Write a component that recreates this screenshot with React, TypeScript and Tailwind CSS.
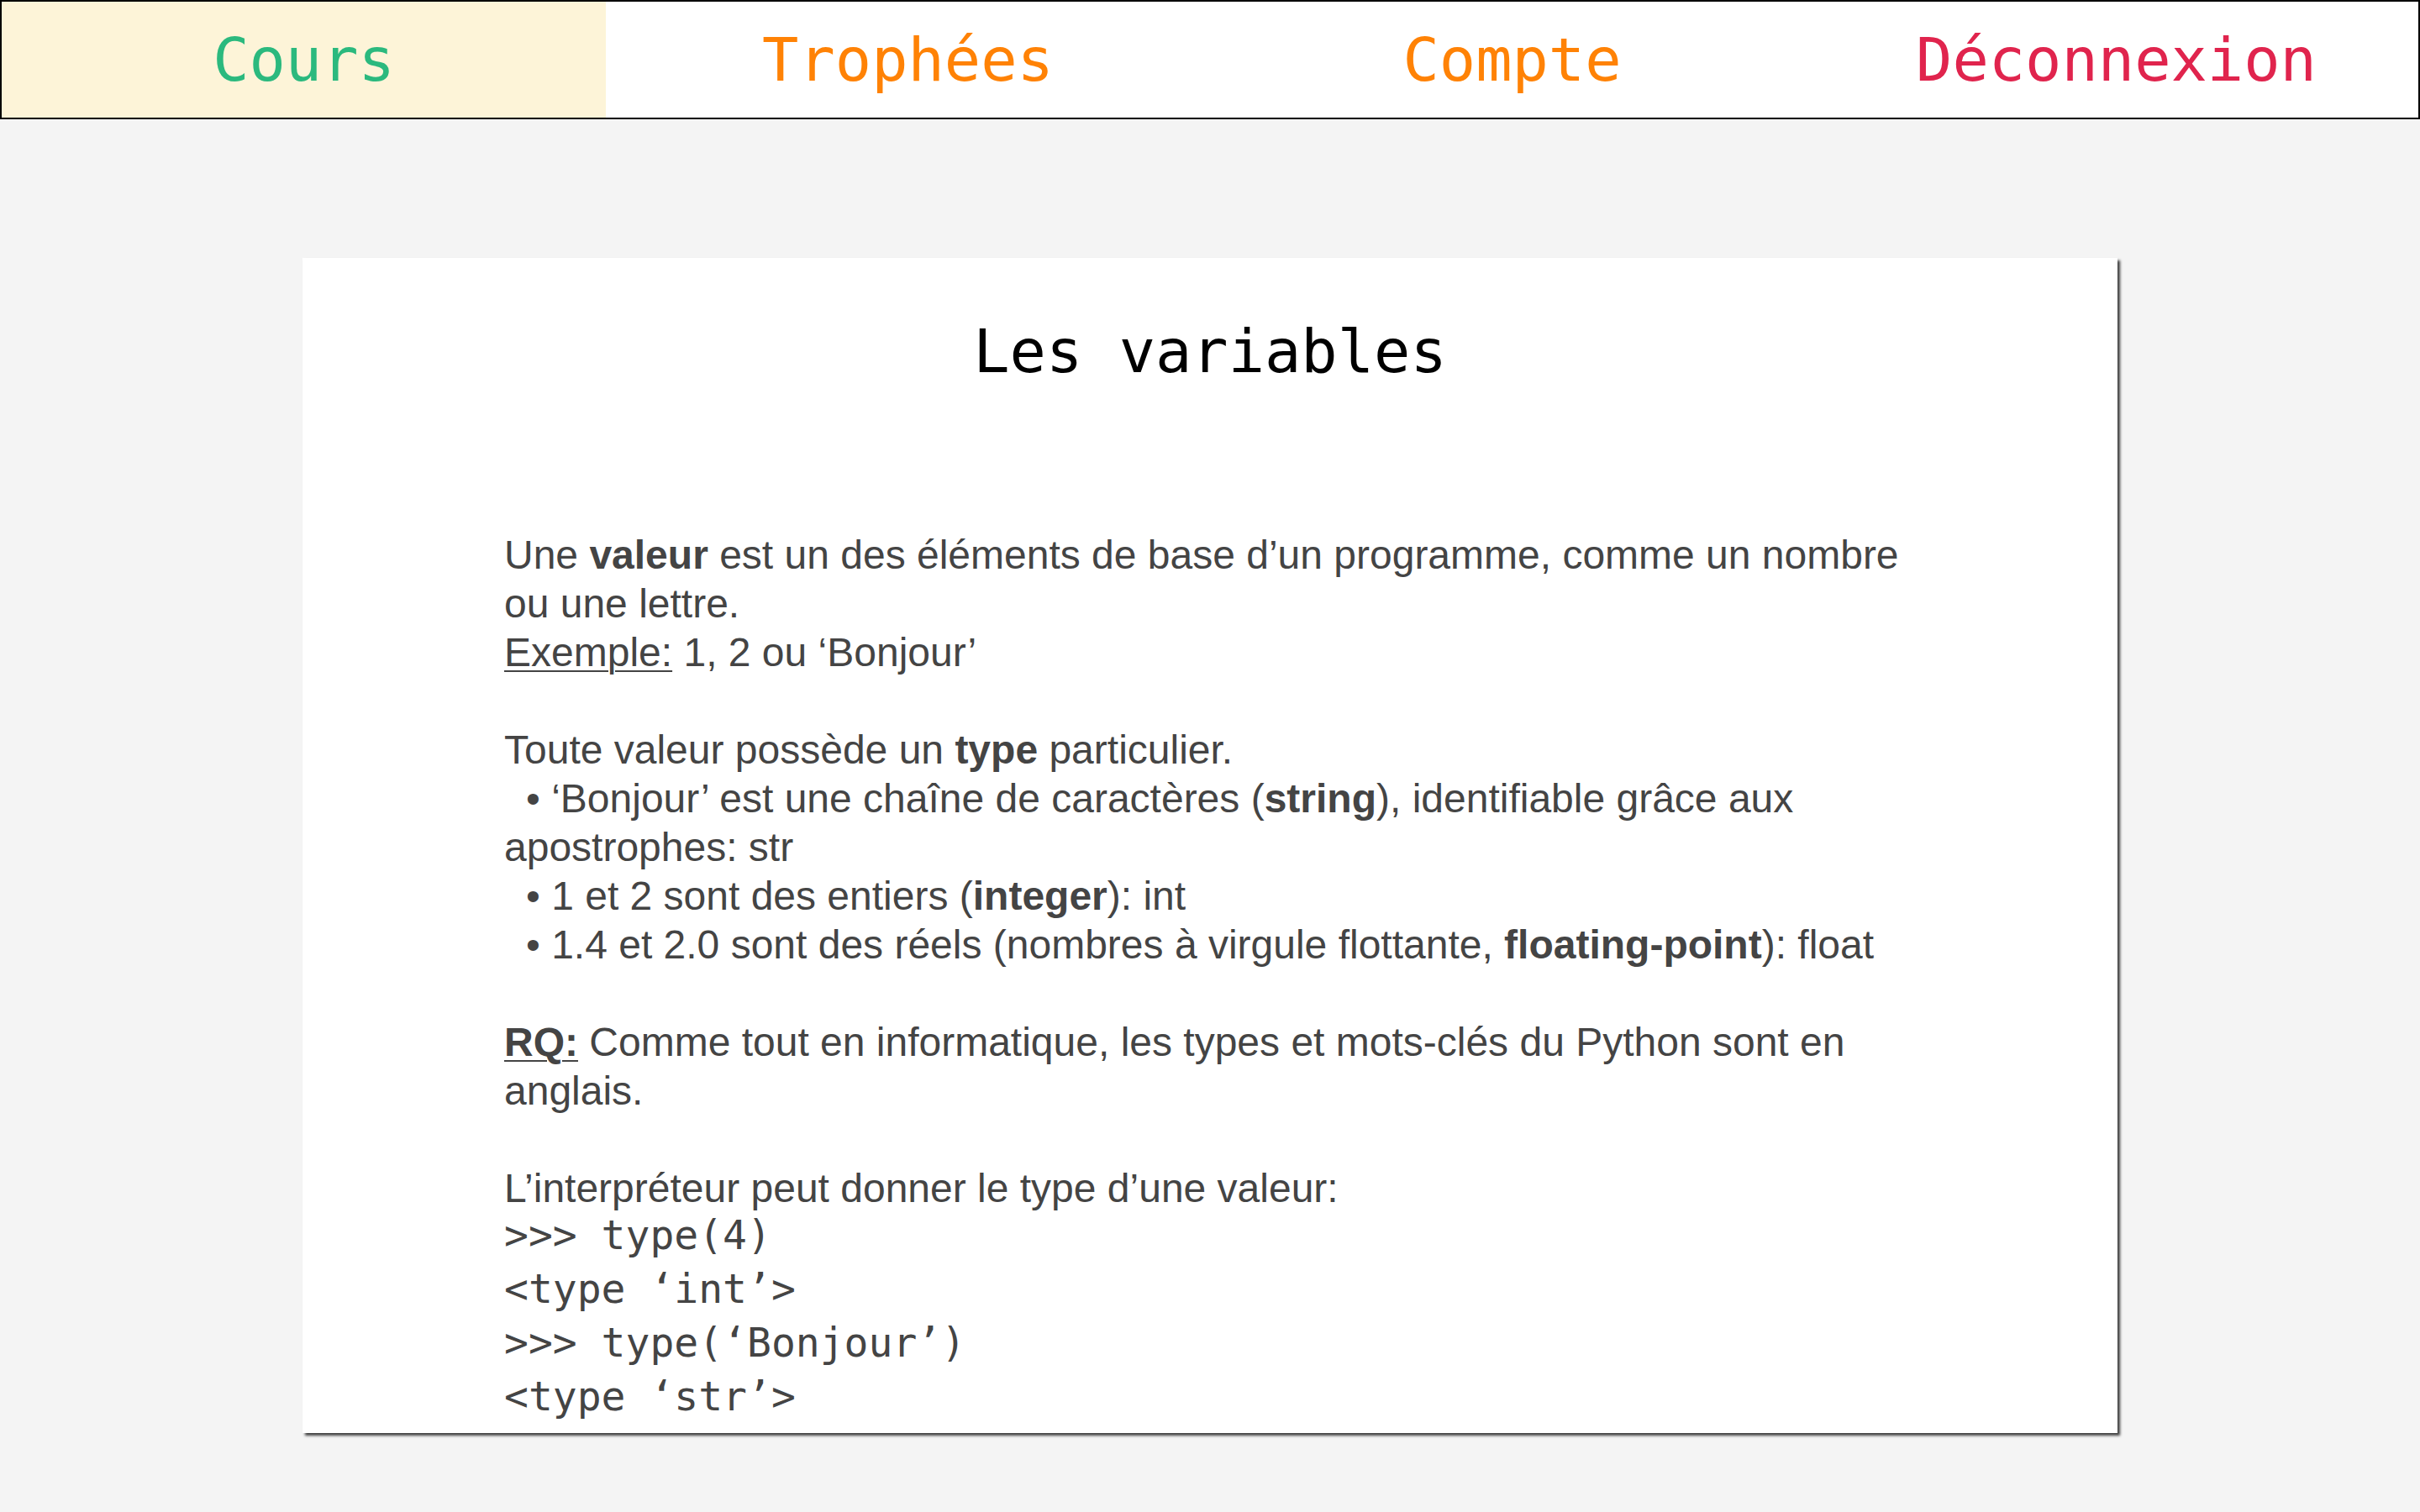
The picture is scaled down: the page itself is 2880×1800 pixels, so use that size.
import React from 'react';

const navItems = [
  { label: 'Cours', color: 'text-[#2bb97e]', active: true },
  { label: 'Trophées', color: 'text-[#ff8205]', active: false },
  { label: 'Compte', color: 'text-[#ff8205]', active: false },
  { label: 'Déconnexion', color: 'text-[#e0244d]', active: false },
];

const Bullet = () => <span className="pl-[26px]">•</span>;

const Blank = () => <div className="h-[58px]" />;

export default function App() {
  return (
    <div className="min-h-screen bg-[#f4f4f4]">
      <nav className="grid h-[142px] grid-cols-4 border-2 border-black bg-white">
        {navItems.map((item) => (
          <a
            key={item.label}
            href="#"
            className={`flex items-center justify-center font-['DejaVu_Sans_Mono',monospace] text-[72px] ${item.color} ${
              item.active ? 'bg-[#fdf4d8]' : 'bg-white'
            }`}
          >
            {item.label}
          </a>
        ))}
      </nav>

      <main className="flex justify-center pt-[165px] pb-[90px]">
        <article className="w-[2160px] bg-white pt-[75px] pb-[12px] shadow-[3px_3px_3px_rgba(0,0,0,0.75)]">
          <h1 className="text-center font-['DejaVu_Sans_Mono',monospace] text-[72px] leading-[72px] text-black">
            Les variables
          </h1>

          <div className="mt-[178px] pl-[240px] font-['Liberation_Sans',Arial,sans-serif] text-[48px] leading-[58px] text-[#444] whitespace-nowrap">
            <div>
              Une <b>valeur</b> est un des éléments de base d’un programme, comme un nombre
            </div>
            <div>ou une lettre.</div>
            <div>
              <u className="decoration-2 underline-offset-[5px]">Exemple:</u> 1, 2 ou ‘Bonjour’
            </div>
            <Blank />
            <div>
              Toute valeur possède un <b>type</b> particulier.
            </div>
            <div>
              <Bullet /> ‘Bonjour’ est une chaîne de caractères (<b>string</b>), identifiable grâce aux
            </div>
            <div>apostrophes: str</div>
            <div>
              <Bullet /> 1 et 2 sont des entiers (<b>integer</b>): int
            </div>
            <div>
              <Bullet /> 1.4 et 2.0 sont des réels (nombres à virgule flottante, <b>floating-point</b>): float
            </div>
            <Blank />
            <div>
              <b>
                <u className="decoration-2 underline-offset-[5px]">RQ:</u>
              </b>{' '}
              Comme tout en informatique, les types et mots-clés du Python sont en
            </div>
            <div>anglais.</div>
            <Blank />
            <div>L’interpréteur peut donner le type d’une valeur:</div>

            <pre className="-mt-[6px] font-['DejaVu_Sans_Mono',monospace] text-[48px] leading-[64px] text-[#444]">
              {'>>> type(4)\n<type ‘int’>\n>>> type(‘Bonjour’)\n<type ‘str’>'}
            </pre>
          </div>
        </article>
      </main>
    </div>
  );
}
